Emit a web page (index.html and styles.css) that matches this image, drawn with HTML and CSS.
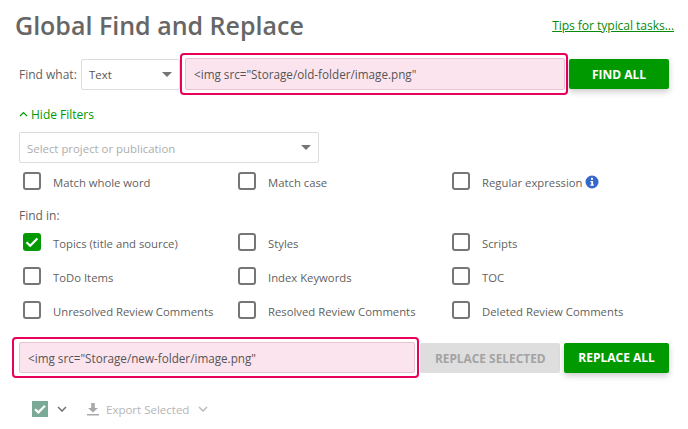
FILE: index.html
```html
<!DOCTYPE html>
<html lang="en">
<head>
<meta charset="utf-8">
<title>Global Find and Replace</title>
<link rel="stylesheet" href="styles.css">
</head>
<body>
<main class="page">
  <header class="head">
    <h1 class="title">Global Find and Replace</h1>
    <a class="tips" href="#">Tips for typical tasks...</a>
  </header>

  <div class="find-row">
    <span class="find-label">Find what:</span>
    <div class="select select-type"><span>Text</span><i class="caret"></i></div>
    <div class="hl hl-find"><div class="field">&lt;img src="Storage/old-folder/image.png"</div></div>
    <button class="btn btn-find">FIND ALL</button>
  </div>

  <a class="toggle" href="#">
    <svg class="toggle-icon" width="9" height="6" viewBox="0 0 9 6"><path d="M1 5l3.5-3.5L8 5" fill="none" stroke="#009a00" stroke-width="1.2"/></svg>
    Hide Filters
  </a>

  <div class="select select-project"><span class="placeholder">Select project or publication</span><i class="caret"></i></div>

  <div class="checks checks-options">
    <label class="check"><i class="box"></i><span class="check-text">Match whole word</span></label>
    <label class="check"><i class="box"></i><span class="check-text">Match case</span></label>
    <label class="check"><i class="box"></i><span class="check-text">Regular expression</span>
      <svg class="info" width="14" height="14" viewBox="0 0 14 14"><circle cx="7" cy="7" r="6.5" fill="#3566cc"/><rect x="6" y="2.8" width="2" height="2" fill="#fff"/><path d="M5.4 6h2.7v3.6h.8v1.2H5.4V9.6h.9V7.2h-.9z" fill="#fff"/></svg>
    </label>
  </div>

  <div class="find-in">Find in:</div>

  <div class="checks checks-scope">
    <label class="check"><i class="box box-on"><svg width="18" height="18" viewBox="0 0 18 18"><path d="M3.5 9.2l3.7 3.6 7.2-7.3" fill="none" stroke="#fff" stroke-width="2.2"/></svg></i><span class="check-text">Topics (title and source)</span></label>
    <label class="check"><i class="box"></i><span class="check-text">Styles</span></label>
    <label class="check"><i class="box"></i><span class="check-text">Scripts</span></label>
    <label class="check"><i class="box"></i><span class="check-text">ToDo Items</span></label>
    <label class="check"><i class="box"></i><span class="check-text">Index Keywords</span></label>
    <label class="check"><i class="box"></i><span class="check-text">TOC</span></label>
    <label class="check"><i class="box"></i><span class="check-text">Unresolved Review Comments</span></label>
    <label class="check"><i class="box"></i><span class="check-text">Resolved Review Comments</span></label>
    <label class="check"><i class="box"></i><span class="check-text">Deleted Review Comments</span></label>
  </div>

  <div class="replace-row">
    <div class="hl hl-replace"><div class="field">&lt;img src="Storage/new-folder/image.png"</div></div>
    <button class="btn btn-off">REPLACE SELECTED</button>
    <button class="btn btn-replace">REPLACE ALL</button>
  </div>

  <div class="toolbar">
    <span class="bulk"><svg width="16" height="16" viewBox="0 0 16 16"><path d="M3 8.2l3.4 3.2L13 4.8" fill="none" stroke="#fff" stroke-width="2.2"/></svg></span>
    <svg class="chev" width="10" height="6" viewBox="0 0 10 6"><path d="M1 1l4 4 4-4" fill="none" stroke="#757575" stroke-width="1.6"/></svg>
    <svg class="dl" width="12" height="13" viewBox="0 0 12 13"><path d="M4.2 0h3.6v5H11L6 9.6 1 5h3.2zM0 11h12v1.6H0z" fill="#a9a9a9"/></svg>
    <span class="export">Export Selected</span>
    <svg class="chev-light" width="10" height="6" viewBox="0 0 10 6"><path d="M1 1l4 4 4-4" fill="none" stroke="#bdbdbd" stroke-width="1.6"/></svg>
  </div>
</main>
</body>
</html>
```
FILE: styles.css
```css
* { box-sizing: border-box; }
html, body { margin: 0; background: #fff; }
body { font-family: "Open Sans", "Noto Sans", "Liberation Sans", sans-serif; font-size: 12px; color: #5f5f5f; }
.page { width: 688px; height: 429px; overflow: hidden; padding: 0 19px; }

.head { display: flex; justify-content: space-between; height: 53px; margin: 0 -5px 0 -4px; }
.title { margin: 9px 0 0; font-size: 25px; line-height: 33px; font-weight: 600; color: #666; }
.tips { margin: 17px 0 0; font-size: 12.2px; line-height: 18px; color: #0a8a0a; letter-spacing: -0.1px; }

.find-row { display: flex; align-items: center; height: 42px; }
.find-label { width: 62px; font-size: 12px; }
.select { display: flex; align-items: center; justify-content: space-between; background: #fff; border: 1px solid #dcdcdc; border-radius: 2px; padding: 0 7px 0 7px; font-size: 11.4px; }
.select-type { width: 99px; height: 31px; color: #555; }
.select-project { width: 300px; height: 31px; margin-top: 9px; }
.placeholder { color: #adadad; padding-top: 2px; }
.caret { width: 0; height: 0; border-left: 5px solid transparent; border-right: 5px solid transparent; border-top: 5px solid #757575; }

.hl { border: 2px solid #e8005a; border-radius: 4px; background: #fff; padding: 3px; }
.hl-find { width: 388px; height: 42px; padding-right: 1px; }
.field { height: 100%; background: #fce4ee; border: 1px solid #e6c3d2; border-radius: 2px; padding: 0 8px; display: flex; align-items: center; color: #555; font-size: 11.7px; }

.btn { border: 0; border-radius: 2px; font: 700 12px "Open Sans", "Noto Sans", sans-serif; height: 30px; padding: 0; }
.btn-find { width: 100px; margin-left: 1px; background: #009a00; color: #fff; box-shadow: 0 3px 6px rgba(0,0,0,.2); }
.btn-replace { width: 105px; margin-left: 4px; background: #009a00; color: #fff; box-shadow: 0 3px 6px rgba(0,0,0,.2); }
.btn-off { width: 140px; margin-left: 1px; background: #dedede; color: #a3a3a3; font-size: 11.9px; }

.toggle { display: flex; align-items: center; gap: 3px; margin-top: 10px; height: 18px; color: #009a00; font-size: 12px; text-decoration: none; }

.checks { display: grid; grid-template-columns: 215px 214px 1fr; padding-left: 4px; }
.checks-options { margin-top: 9px; }
.checks-scope { row-gap: 16px; margin-top: 8px; }
.check { display: flex; align-items: center; height: 18px; font-size: 11.3px; white-space: nowrap; }
.check-text { padding-top: 2px; }
.box { flex: none; width: 18px; height: 18px; margin-right: 12px; border: 2px solid #767676; border-radius: 3px; background: #fff; }
.box-on { border: 0; background: #009a00; }
.box-on svg { display: block; }
.info { margin-left: 2px; margin-top: 2px; }

.find-in { margin-top: 17px; height: 18px; line-height: 18px; font-size: 12px; }

.replace-row { display: flex; align-items: center; height: 41px; margin: 18px 0 0 -7px; }
.hl-replace { width: 408px; height: 41px; padding: 3px 2px 3px 5px; }

.toolbar { display: flex; align-items: center; height: 16px; margin: 23px 0 0 13px; }
.bulk { width: 16px; height: 16px; background: #7aa998; }
.bulk svg { display: block; }
.chev { margin-left: 9px; }
.dl { margin-left: 20px; }
.export { margin-left: 7px; color: #b5b5b5; font-size: 11.5px; }
.chev-light { margin-left: 9px; }
```
